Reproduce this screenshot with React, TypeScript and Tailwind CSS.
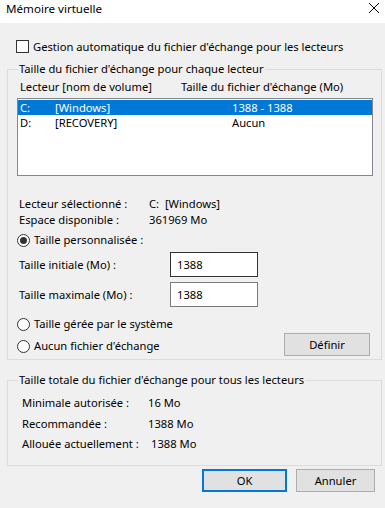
import React from 'react';

const font = "font-['Segoe_UI','Noto_Sans','Liberation_Sans',sans-serif]";

const Radio: React.FC<{ checked?: boolean; label: string }> = ({ checked, label }) => (
  <div className="flex items-center h-[16px] ml-[9px]">
    <span className="w-[13px] h-[13px] rounded-full border border-[#333333] bg-white flex items-center justify-center">
      {checked && <span className="w-[7px] h-[7px] rounded-full bg-[#333333]" />}
    </span>
    <span className="ml-[4px]">{label}</span>
  </div>
);

const GroupBox: React.FC<{ title: string; className?: string; children: React.ReactNode }> = ({
  title,
  className,
  children,
}) => (
  <div className={`ml-[7px] w-[375px] border border-[#dcdcdc] ${className ?? ''}`}>
    <div className="-mt-[9px] ml-[10px] px-[1px] w-fit h-[16px] leading-[16px] bg-[#f0f0f0]">{title}</div>
    {children}
  </div>
);

const drives = [
  { letter: 'C:', name: '[Windows]', size: '1388 - 1388', selected: true },
  { letter: 'D:', name: '[RECOVERY]', size: 'Aucun', selected: false },
];

export default function App() {
  return (
    <div className={`w-[385px] h-[508px] bg-[#f0f0f0] text-[11.2px] leading-[16px] text-black flex flex-col ${font}`}>
      {/* title bar */}
      <div className="h-[23px] bg-white flex items-center justify-between pl-[6px] pr-[3px]">
        <span className="-mt-[6px] text-[11.6px]">Mémoire virtuelle</span>
        <svg width="12" height="12" viewBox="0 0 12 12" className="-mt-[8px] mr-[2px]">
          <path d="M1 1 L11 11 M11 1 L1 11" stroke="#000" strokeWidth="1" />
        </svg>
      </div>

      <div className="mt-[17px] ml-[16px] flex items-center h-[13px]">
        <span className="w-[13px] h-[13px] border border-[#333333] bg-white" />
        <span className="ml-[4px]">Gestion automatique du fichier d'échange pour les lecteurs</span>
      </div>

      <GroupBox title="Taille du fichier d'échange pour chaque lecteur" className="mt-[16px] pb-[3px]">
        <div className="mt-[2px] flex pl-[12px]">
          <span className="w-[161px]">Lecteur [nom de volume]</span>
          <span>Taille du fichier d'échange (Mo)</span>
        </div>

        <div className="mt-[3px] ml-[9px] w-[356px] h-[78px] border border-[#828790] bg-white pt-[1px]">
          {drives.map((d) => (
            <div
              key={d.letter}
              className={`flex h-[15px] leading-[15px] items-center pl-[2px] ${d.selected ? 'bg-[#0078d7] text-white' : ''}`}
            >
              <span className="w-[35px]">{d.letter}</span>
              <span className="w-[177px]">{d.name}</span>
              <span>{d.size}</span>
            </div>
          ))}
        </div>

        <div className="mt-[20px] pl-[11px]">
          <div className="flex">
            <span className="w-[130px]">Lecteur sélectionné :</span>
            <span>C:&nbsp;&nbsp;[Windows]</span>
          </div>
          <div className="flex">
            <span className="w-[130px]">Espace disponible :</span>
            <span>361969 Mo</span>
          </div>
        </div>

        <div className="mt-[4px]">
          <Radio checked label="Taille personnalisée :" />
        </div>

        <div className="mt-[4px] flex items-center pl-[11px]">
          <span className="w-[151px]">Taille initiale (Mo) :</span>
          <div className="w-[88px] h-[25px] border border-[#333333] bg-white pl-[6px] flex items-center">1388</div>
        </div>
        <div className="mt-[5px] flex items-center pl-[11px]">
          <span className="w-[151px]">Taille maximale (Mo) :</span>
          <div className="w-[88px] h-[25px] border border-[#7a7a7a] bg-white pl-[6px] flex items-center">1388</div>
        </div>

        <div className="mt-[9px]">
          <Radio label="Taille gérée par le système" />
        </div>

        <div className="mt-[1px] flex items-center justify-between h-[23px] pr-[11px]">
          <div className="pt-[3px]">
            <Radio label="Aucun fichier d'échange" />
          </div>
          <button className="w-[86px] h-[23px] border border-[#adadad] bg-[#e1e1e1]">Définir</button>
        </div>
      </GroupBox>

      <GroupBox title="Taille totale du fichier d'échange pour tous les lecteurs" className="mt-[20px] pb-[13px]">
        <div className="pl-[14px]">
          <div className="mt-[7px] flex">
            <span className="w-[126px]">Minimale autorisée :</span>
            <span>16 Mo</span>
          </div>
          <div className="mt-[5px] flex">
            <span className="w-[126px]">Recommandée :</span>
            <span>1388 Mo</span>
          </div>
          <div className="mt-[4px] flex">
            <span className="w-[129px]">Allouée actuellement :</span>
            <span>1388 Mo</span>
          </div>
        </div>
      </GroupBox>

      <div className="mt-[3px] flex justify-end pr-[10px] gap-[9px]">
        <button className="w-[85px] h-[23px] border-2 border-[#0078d7] bg-[#e1e1e1]">OK</button>
        <button className="w-[79px] h-[23px] border border-[#adadad] bg-[#e1e1e1]">Annuler</button>
      </div>
    </div>
  );
}
